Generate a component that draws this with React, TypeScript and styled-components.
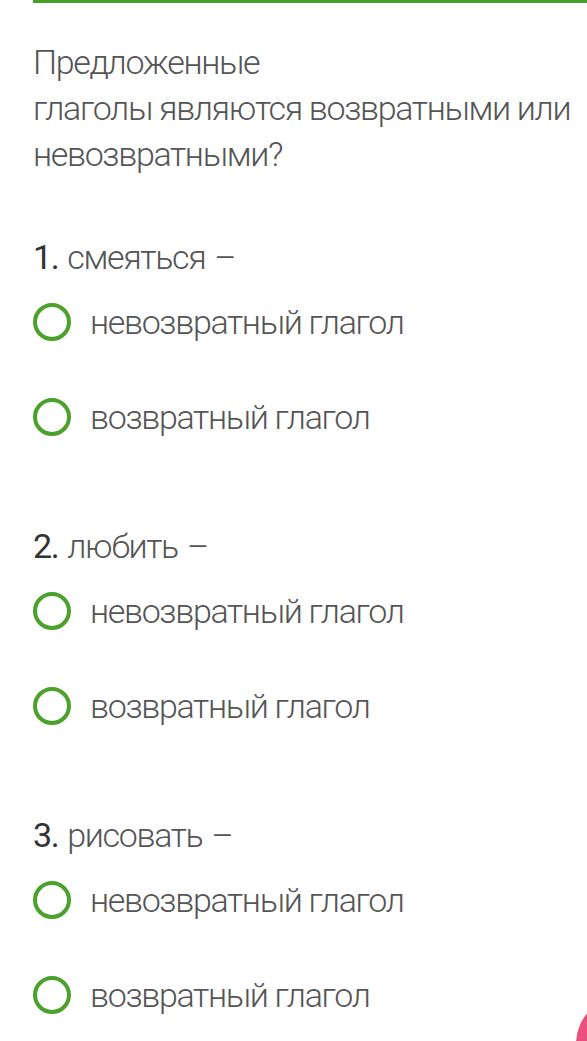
import React from "react";
import styled, { createGlobalStyle } from "styled-components";

const GlobalStyle = createGlobalStyle`
  body {
    margin: 0;
    background: #ffffff;
    font-family: Roboto, "Noto Sans", "Liberation Sans", sans-serif;
  }
`;

const questions = [
  { id: 1, number: "1.", word: "смеяться" },
  { id: 2, number: "2.", word: "любить" },
  { id: 3, number: "3.", word: "рисовать" },
];

const options = ["невозвратный глагол", "возвратный глагол"];

function App() {
  return (
    <>
      <GlobalStyle />
      <Page>
        <TopBar />
        <Question>
          Предложенные
          <br />
          глаголы являются возвратными или
          <br />
          невозвратными?
        </Question>
        <List>
          {questions.map((q) => (
            <Section key={q.id}>
              <Heading>
                <Number>{q.number}</Number> {q.word} –
              </Heading>
              <Options>
                {options.map((label) => (
                  <Option key={label}>
                    <Radio />
                    <OptionText>{label}</OptionText>
                  </Option>
                ))}
              </Options>
            </Section>
          ))}
        </List>
        <Fab />
      </Page>
    </>
  );
}

export default App;

const Page = styled.div`
  position: relative;
  height: 1041px;
  overflow: hidden;
  padding-left: 33px;
  box-sizing: border-box;
`;

const TopBar = styled.div`
  height: 3px;
  background: #45a02a;
  box-shadow: 0 9px 0 -7px #f4f8ef;
`;

const textStyle = `
  font-size: 34px;
  line-height: 46px;
  font-weight: 300;
  letter-spacing: -1.35px;
  color: #555555;
  white-space: nowrap;
`;

const Question = styled.p`
  ${textStyle};
  margin: 36px 0 0;
`;

const List = styled.div`
  display: flex;
  flex-direction: column;
  gap: 76px;
  margin-top: 57px;
`;

const Section = styled.div`
  display: flex;
  flex-direction: column;
  gap: 12px;
`;

const Heading = styled.div`
  ${textStyle};
  word-spacing: 2px;
`;

const Number = styled.span`
  font-weight: 400;
  color: #333333;
`;

const Options = styled.div`
  display: flex;
  flex-direction: column;
  gap: 35px;
`;

const Option = styled.div`
  display: flex;
  align-items: center;
  gap: 19px;
  height: 60px;
`;

const Radio = styled.span`
  width: 38px;
  height: 38px;
  box-sizing: border-box;
  border: 4.5px solid #4ba12c;
  border-radius: 50%;
  flex-shrink: 0;
`;

const OptionText = styled.span`
  ${textStyle};
`;

const Fab = styled.div`
  position: absolute;
  width: 96px;
  height: 96px;
  border-radius: 50%;
  background: #ea4f7f;
  left: 576px;
  top: 996px;
`;
